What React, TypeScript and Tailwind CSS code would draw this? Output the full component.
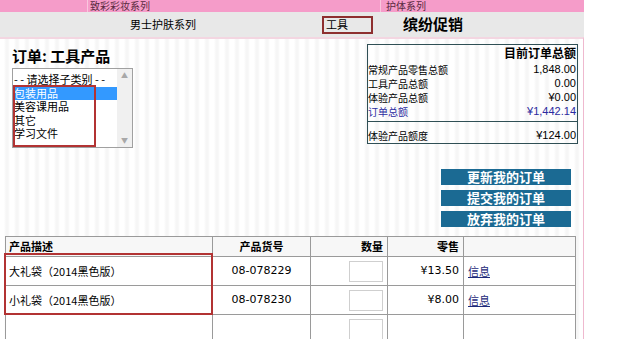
import React from "react";

const cjk = "font-['SimSun','Noto_Sans_CJK_SC',sans-serif]";
const num = "font-['DejaVu_Sans','Noto_Sans_CJK_SC',sans-serif]";
const arial = "font-['Liberation_Sans','Noto_Sans_CJK_SC',sans-serif]";

const summaryRows = [
  { label: "常规产品零售总额", value: "1,848.00" },
  { label: "工具产品总额", value: "0.00" },
  { label: "体验产品总额", value: "¥0.00" },
  { label: "订单总额", value: "¥1,442.14", blue: true },
];

const products = [
  { name: "大礼袋（2014黑色版）", code: "08-078229", price: "¥13.50" },
  { name: "小礼袋（2014黑色版）", code: "08-078230", price: "¥8.00" },
];

const App: React.FC = () => {
  return (
    <div className={`relative w-[626px] h-[339px] overflow-hidden bg-white text-black ${cjk}`}>
      <div className="w-[584px]">
        {/* top pink menu row */}
        <div className="flex h-[12px] items-center overflow-hidden bg-[#f59cc9] text-[10px] leading-[12px] text-[#5a2a40]">
          <div className="h-full w-[88px] border-r border-[#f9c6de]" />
          <div className="h-full w-[293px] border-r border-[#f9c6de] pl-[2px]">致彩彩妆系列</div>
          <div className="h-full flex-1 pl-[5px]">护体系列</div>
        </div>

        {/* gray sub menu */}
        <div className="flex h-[25px] items-center bg-[#e8e8e8] text-[11px]">
          <div className="w-[130px]" />
          <div className="w-[192px]">男士护肤系列</div>
          <div className="flex h-[18px] w-[51px] items-center border-2 border-[#8e2f2f] pl-[2px]">工具</div>
          <div className="pl-[30px] text-[15px] font-bold">缤纷促销</div>
        </div>

        {/* content */}
        <div className="h-[302px] border-t-2 border-r border-t-[#f3d6e1] border-r-[#efb9cf] bg-[repeating-linear-gradient(90deg,#ffffff_0px,#ffffff_4px,#f6f6f6_6px,#f6f6f6_8px,#ffffff_10px)]">
          <div className="flex h-[130px]">
            <div className="w-[367px] pl-[12px] pt-[8px]">
              <div className="text-[15px] font-bold leading-[18px]">订单: 工具产品</div>
              <div className="mt-[3px] flex h-[80px] w-[121px] border border-[#a0a0a0] bg-white text-[11px]">
                <div className="flex-1 pl-[1px] pt-[4px] leading-[13.5px]">
                  <div>- - 请选择子类别 - -</div>
                  <div className="bg-[#3399ff] text-white">包装用品</div>
                  <div>美容课用品</div>
                  <div>其它</div>
                  <div>学习文件</div>
                </div>
                <div className="flex w-[15px] flex-col items-center justify-between bg-[#f0f0f0] py-[3px] text-[7px] leading-none text-[#a8a8a8]">
                  <span>▲</span>
                  <span>▼</span>
                </div>
              </div>
            </div>

            <div className="mt-[5px] h-[100px] w-[211px] border border-[#2f4f55] text-[10px]">
              <div className="h-[15px] pr-[1px] text-right text-[12px] font-bold leading-[15px]">目前订单总额</div>
              <div className="mt-[2px]">
                {summaryRows.map((r) => (
                  <div
                    key={r.label}
                    className={`flex h-[14px] items-center justify-between pr-[1px] ${r.blue ? "text-[#2b2ba0]" : ""}`}
                  >
                    <span>{r.label}</span>
                    <span className={`${arial} text-[11px]`}>{r.value}</span>
                  </div>
                ))}
              </div>
              <div className="mt-[3px] border-t border-[#2f4f55]" />
              <div className="mt-[6px] flex h-[14px] items-center justify-between pr-[1px]">
                <span>体验产品额度</span>
                <span className={`${arial} text-[11px]`}>¥124.00</span>
              </div>
            </div>
          </div>

          {/* action buttons */}
          <div className="flex flex-col items-end gap-[5px] pr-[12px]">
            {["更新我的订单", "提交我的订单", "放弃我的订单"].map((b) => (
              <div
                key={b}
                className="flex h-[16px] w-[130px] items-center justify-center bg-[#1b6a93] text-[13px] font-bold text-white"
              >
                {b}
              </div>
            ))}
          </div>

          {/* product table */}
          <table className="ml-[5px] mt-[9px] w-[570px] table-fixed border-collapse bg-white text-[11px]">
            <colgroup>
              <col className="w-[207px]" />
              <col className="w-[98px]" />
              <col className="w-[77px]" />
              <col className="w-[76px]" />
              <col className="w-[112px]" />
            </colgroup>
            <thead>
              <tr className="h-[20px] bg-[#f7f7f7] font-bold">
                <th className="border border-[#9a9a9a] pl-[3px] text-left">产品描述</th>
                <th className="border border-[#9a9a9a] text-center">产品货号</th>
                <th className="border border-[#9a9a9a] pr-[4px] text-right">数量</th>
                <th className="border border-[#9a9a9a] pr-[4px] text-right">零售</th>
                <th className="border border-[#9a9a9a]" />
              </tr>
            </thead>
            <tbody>
              {products.map((p) => (
                <tr key={p.code} className="h-[29px]">
                  <td className="border border-[#9a9a9a] pl-[3px]">{p.name}</td>
                  <td className={`border border-[#9a9a9a] text-center ${num}`}>{p.code}</td>
                  <td className="border border-[#9a9a9a] pr-[4px]">
                    <div className="ml-auto h-[21px] w-[34px] border border-[#cfcfcf] bg-white" />
                  </td>
                  <td className={`border border-[#9a9a9a] pr-[4px] text-right ${num}`}>{p.price}</td>
                  <td className="border border-[#9a9a9a] pl-[4px]">
                    <span className="text-[#1d2a7a] underline">信息</span>
                  </td>
                </tr>
              ))}
              <tr className="h-[29px]">
                <td className="border border-[#9a9a9a]" />
                <td className="border border-[#9a9a9a]" />
                <td className="border border-[#9a9a9a] pr-[4px] align-top pt-[4px]">
                  <div className="ml-auto h-[21px] w-[34px] border border-[#cfcfcf] bg-white" />
                </td>
                <td className="border border-[#9a9a9a]" />
                <td className="border border-[#9a9a9a]" />
              </tr>
            </tbody>
          </table>
        </div>
      </div>

      {/* red annotation boxes */}
      <div className="absolute left-[13px] top-[85px] h-[62px] w-[83px] border-2 border-[#b23333]" />
      <div className="absolute left-[4px] top-[253px] h-[62px] w-[209px] border-2 border-[#b23333]" />
    </div>
  );
};

export default App;
